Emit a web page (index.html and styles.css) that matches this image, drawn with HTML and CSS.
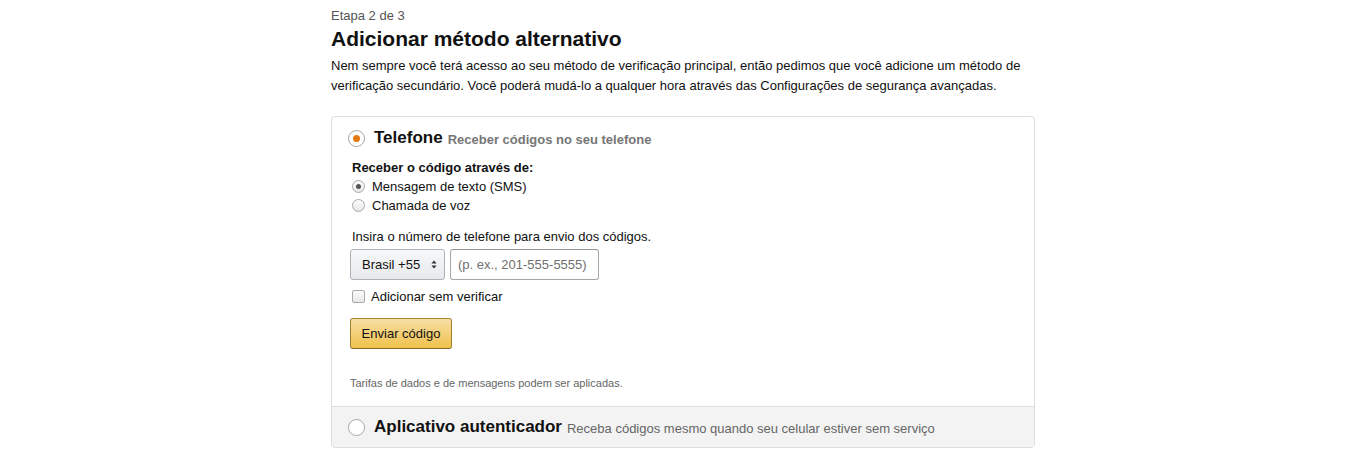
FILE: index.html
```html
<!DOCTYPE html>
<html lang="pt-BR">
<head>
<meta charset="utf-8">
<title>Adicionar método alternativo</title>
<link rel="stylesheet" href="styles.css">
</head>
<body>
<main class="page">
  <div class="step">Etapa 2 de 3</div>
  <h1 class="title">Adicionar método alternativo</h1>
  <p class="intro">Nem sempre você terá acesso ao seu método de verificação principal, então pedimos que você adicione um método de verificação secundário. Você poderá mudá-lo a qualquer hora através das Configurações de segurança avançadas.</p>

  <div class="card">
    <section class="option option-active">
      <div class="option-head">
        <span class="big-radio checked"></span>
        <span class="option-title">Telefone</span>
        <span class="option-sub">Receber códigos no seu telefone</span>
      </div>
      <div class="option-body">
        <div class="label-bold">Receber o código através de:</div>
        <div class="radio-row"><span class="small-radio checked"></span><span>Mensagem de texto (SMS)</span></div>
        <div class="radio-row"><span class="small-radio"></span><span>Chamada de voz</span></div>
        <div class="label-plain">Insira o número de telefone para envio dos códigos.</div>
        <div class="phone-row">
          <div class="select">Brasil +55
            <svg class="updown" width="6" height="9" viewBox="0 0 6 9"><path d="M3 0.5 L5.6 3.4 H0.4 Z M3 8.5 L5.6 5.6 H0.4 Z" fill="#333"/></svg>
          </div>
          <div class="input">(p. ex., 201-555-5555)</div>
        </div>
        <div class="check-row"><span class="checkbox"></span><span>Adicionar sem verificar</span></div>
        <div class="btn">Enviar código</div>
        <div class="note">Tarifas de dados e de mensagens podem ser aplicadas.</div>
      </div>
    </section>
    <section class="option option-alt">
      <div class="option-head">
        <span class="big-radio"></span>
        <span class="option-title">Aplicativo autenticador</span>
        <span class="option-sub light">Receba códigos mesmo quando seu celular estiver sem serviço</span>
      </div>
    </section>
  </div>
</main>
</body>
</html>
```

FILE: styles.css
```css
* { box-sizing: border-box; }
body {
  margin: 0;
  background: #fff;
  font-family: "Liberation Sans", Arial, sans-serif;
  color: #111;
  font-size: 13px;
}
.page {
  width: 704px;
  margin: 0 auto;
  padding-top: 8px;
}
.step {
  color: #555;
  font-size: 13px;
  line-height: 16px;
}
.title {
  margin: 2px 0 0 0;
  font-size: 21px;
  font-weight: 700;
  line-height: 26px;
}
.intro {
  margin: 4px 0 0 0;
  line-height: 20px;
  width: 700px;
}
.card {
  margin-top: 20px;
  border: 1px solid #ddd;
  border-radius: 4px;
  overflow: hidden;
}
.option-active {
  padding: 10px 18px 16px 16px;
}
.option-head {
  display: flex;
  align-items: center;
  height: 22px;
}
.big-radio {
  width: 17px;
  height: 17px;
  border-radius: 50%;
  border: 1px solid #a6a6a6;
  background: #fff;
  margin-right: 9px;
  display: flex;
  align-items: center;
  justify-content: center;
  flex: none;
}
.big-radio.checked::after {
  content: "";
  width: 7px;
  height: 7px;
  border-radius: 50%;
  background: #e47911;
}
.option-title {
  font-size: 17px;
  font-weight: 700;
  margin-right: 5px;
}
.option-sub {
  font-size: 13px;
  font-weight: 700;
  color: #767676;
  padding-top: 2px;
}
.option-sub.light {
  font-weight: 400;
  color: #666;
}
.option-body {
  padding-left: 4px;
  padding-top: 9px;
}
.label-bold {
  font-weight: 700;
  line-height: 19px;
}
.radio-row, .check-row {
  display: flex;
  align-items: center;
  line-height: 19px;
}
.small-radio {
  width: 13px;
  height: 13px;
  border-radius: 50%;
  border: 1px solid #aaa;
  background: linear-gradient(#fcfcfc, #e8e8e8);
  margin-right: 7px;
  display: flex;
  align-items: center;
  justify-content: center;
  flex: none;
}
.small-radio.checked::after {
  content: "";
  width: 5px;
  height: 5px;
  border-radius: 50%;
  background: #555;
}
.label-plain {
  margin-top: 12px;
  line-height: 19px;
}
.phone-row {
  display: flex;
  gap: 5px;
  margin-top: 3px;
  margin-left: -2px;
}
.select {
  height: 31px;
  width: 95px;
  border: 1px solid #adb1b8;
  border-radius: 3px;
  background: linear-gradient(#f7f8fa, #e7e9ec);
  display: flex;
  align-items: center;
  padding-left: 11px;
  gap: 11px;
  color: #111;
}
.updown { display: block; }
.input {
  height: 31px;
  width: 149px;
  border: 1px solid #a6a6a6;
  border-top-color: #949494;
  border-radius: 3px;
  display: flex;
  align-items: center;
  padding-left: 7px;
  color: #6f6f6f;
}
.check-row {
  margin-top: 7px;
}
.checkbox {
  width: 13px;
  height: 13px;
  border: 1px solid #aaa;
  border-radius: 2px;
  background: linear-gradient(#fcfcfc, #e8e8e8);
  margin-right: 6px;
  flex: none;
}
.btn {
  margin-top: 12px;
  margin-left: -2px;
  width: 102px;
  height: 31px;
  border: 1px solid #a88734;
  border-color: #a88734 #9c7e31 #846a29;
  border-radius: 3px;
  background: linear-gradient(#f7dfa5, #f0c14b);
  display: flex;
  align-items: center;
  justify-content: center;
  color: #111;
}
.note {
  margin-top: 27px;
  margin-left: -2px;
  font-size: 11px;
  color: #666;
  line-height: 14px;
}
.option-alt {
  background: #f3f3f3;
  border-top: 1px solid #ddd;
  padding: 9px 18px 9px 16px;
}
.option-alt .option-head {
  height: 22px;
}
```
